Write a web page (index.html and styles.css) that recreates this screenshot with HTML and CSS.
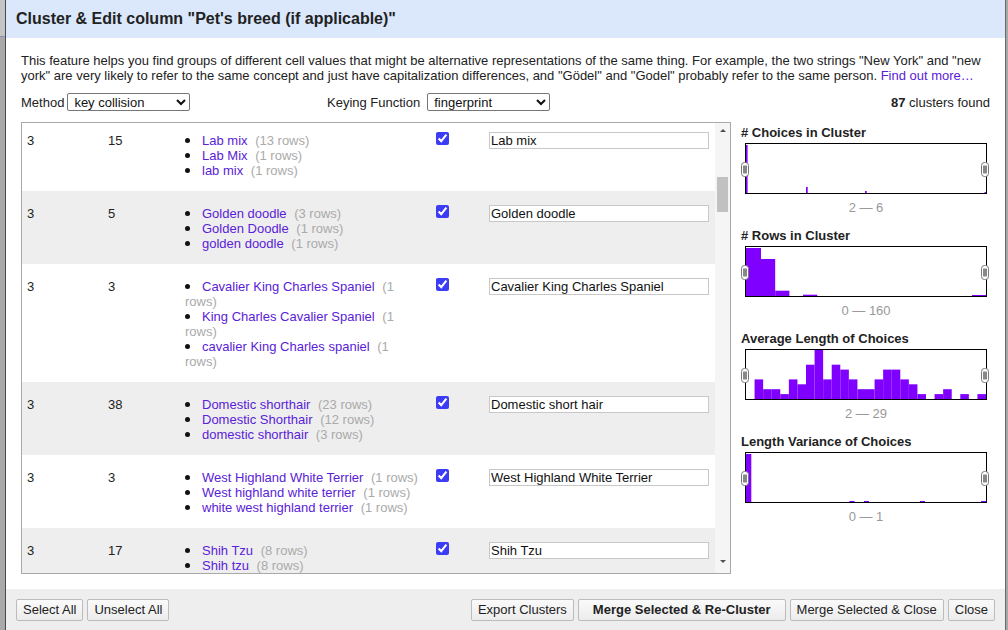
FILE: index.html
```html
<!DOCTYPE html>
<html>
<head>
<meta charset="utf-8">
<link rel="stylesheet" href="styles.css">
</head>
<body>
<div class="strip"></div>
<div class="dialog">
  <div class="dlg-header">Cluster &amp; Edit column "Pet's breed (if applicable)"</div>
  <div class="dlg-body">
    <p class="desc">This feature helps you find groups of different cell values that might be alternative representations of the same thing. For example, the two strings "New York" and "new york" are very likely to refer to the same concept and just have capitalization differences, and "Gödel" and "Godel" probably refer to the same person. <a class="link" href="#">Find out more…</a></p>
    <div class="controls">
      <div class="ctl-method">Method <select class="sel"><option>key collision</option></select></div>
      <div class="ctl-key">Keying Function <select class="sel"><option>fingerprint</option></select></div>
      <div class="found"><b>87</b> clusters found</div>
    </div>
    <div class="main">
      <div class="tablebox">
        <div class="tablewrap">
          <table class="clusters">
            <colgroup><col class="c1"><col class="c2"><col class="c3"><col class="c4"><col class="c5"></colgroup>
            <tr class="odd">
              <td>3</td><td>15</td>
              <td class="names"><ul class="choices">
                <li><a class="link" href="#">Lab mix</a> <span class="cnt">(13 rows)</span></li>
                <li><a class="link" href="#">Lab Mix</a> <span class="cnt">(1 rows)</span></li>
                <li><a class="link" href="#">lab mix</a> <span class="cnt">(1 rows)</span></li>
              </ul></td>
              <td><input class="chk" type="checkbox" checked></td>
              <td><input class="val" type="text" value="Lab mix"></td>
            </tr>
            <tr class="even">
              <td>3</td><td>5</td>
              <td class="names"><ul class="choices">
                <li><a class="link" href="#">Golden doodle</a> <span class="cnt">(3 rows)</span></li>
                <li><a class="link" href="#">Golden Doodle</a> <span class="cnt">(1 rows)</span></li>
                <li><a class="link" href="#">golden doodle</a> <span class="cnt">(1 rows)</span></li>
              </ul></td>
              <td><input class="chk" type="checkbox" checked></td>
              <td><input class="val" type="text" value="Golden doodle"></td>
            </tr>
            <tr class="odd">
              <td>3</td><td>3</td>
              <td class="names"><ul class="choices">
                <li><a class="link" href="#">Cavalier King Charles Spaniel</a> <span class="cnt">(1 rows)</span></li>
                <li><a class="link" href="#">King Charles Cavalier Spaniel</a> <span class="cnt">(1 rows)</span></li>
                <li><a class="link" href="#">cavalier King Charles spaniel</a> <span class="cnt">(1 rows)</span></li>
              </ul></td>
              <td><input class="chk" type="checkbox" checked></td>
              <td><input class="val" type="text" value="Cavalier King Charles Spaniel"></td>
            </tr>
            <tr class="even">
              <td>3</td><td>38</td>
              <td class="names"><ul class="choices">
                <li><a class="link" href="#">Domestic shorthair</a> <span class="cnt">(23 rows)</span></li>
                <li><a class="link" href="#">Domestic Shorthair</a> <span class="cnt">(12 rows)</span></li>
                <li><a class="link" href="#">domestic shorthair</a> <span class="cnt">(3 rows)</span></li>
              </ul></td>
              <td><input class="chk" type="checkbox" checked></td>
              <td><input class="val" type="text" value="Domestic short hair"></td>
            </tr>
            <tr class="odd">
              <td>3</td><td>3</td>
              <td class="names"><ul class="choices">
                <li><a class="link" href="#">West Highland White Terrier</a> <span class="cnt">(1 rows)</span></li>
                <li><a class="link" href="#">West highland white terrier</a> <span class="cnt">(1 rows)</span></li>
                <li><a class="link" href="#">white west highland terrier</a> <span class="cnt">(1 rows)</span></li>
              </ul></td>
              <td><input class="chk" type="checkbox" checked></td>
              <td><input class="val" type="text" value="West Highland White Terrier"></td>
            </tr>
            <tr class="even">
              <td>3</td><td>17</td>
              <td class="names"><ul class="choices">
                <li><a class="link" href="#">Shih Tzu</a> <span class="cnt">(8 rows)</span></li>
                <li><a class="link" href="#">Shih tzu</a> <span class="cnt">(8 rows)</span></li>
                <li><a class="link" href="#">shih tzu</a> <span class="cnt">(1 rows)</span></li>
              </ul></td>
              <td><input class="chk" type="checkbox" checked></td>
              <td><input class="val" type="text" value="Shih Tzu"></td>
            </tr>
          </table>
        </div>
        <div class="scrollbar">
          <div class="sb-btn"><div class="arrow-up"></div></div>
          <div class="sb-track"><div class="sb-thumb"></div></div>
          <div class="sb-btn sb-btn-down"><div class="arrow-down"></div></div>
        </div>
      </div>
      <div class="facets">
        <div class="facet">
          <div class="facet-title"># Choices in Cluster</div>
          <div class="hist">
            <svg class="hist-svg" width="240" height="49" viewBox="0 0 240 49">
              <g fill="#7f00ff">
                <rect x="0" y="1" width="1.6" height="48"/>
                <rect x="60" y="43" width="1.7" height="6"/>
                <rect x="119" y="47" width="1.7" height="2"/>
                <rect x="238.5" y="48" width="1.5" height="1"/>
              </g>
            </svg>
            <svg class="handle handle-l" width="8" height="15" viewBox="0 0 8 15"><rect x="0.5" y="0.5" width="7" height="14" rx="3" fill="#fff" stroke="#777"/><path d="M3 3.5V11.5M5 3.5V11.5" stroke="#111" stroke-width="1"/></svg>
            <svg class="handle handle-r" width="8" height="15" viewBox="0 0 8 15"><rect x="0.5" y="0.5" width="7" height="14" rx="3" fill="#fff" stroke="#777"/><path d="M3 3.5V11.5M5 3.5V11.5" stroke="#111" stroke-width="1"/></svg>
          </div>
          <div class="facet-range">2 — 6</div>
        </div>
        <div class="facet">
          <div class="facet-title"># Rows in Cluster</div>
          <div class="hist">
            <svg class="hist-svg" width="240" height="49" viewBox="0 0 240 49">
              <g fill="#7f00ff">
                <rect x="0" y="1" width="15" height="48"/>
                <rect x="15" y="12" width="14.2" height="37"/>
                <rect x="29.2" y="43.7" width="14.2" height="5.3"/>
                <rect x="57" y="47.7" width="14.3" height="1.3"/>
                <rect x="226" y="48" width="14" height="1"/>
              </g>
            </svg>
            <svg class="handle handle-l" width="8" height="15" viewBox="0 0 8 15"><rect x="0.5" y="0.5" width="7" height="14" rx="3" fill="#fff" stroke="#777"/><path d="M3 3.5V11.5M5 3.5V11.5" stroke="#111" stroke-width="1"/></svg>
            <svg class="handle handle-r" width="8" height="15" viewBox="0 0 8 15"><rect x="0.5" y="0.5" width="7" height="14" rx="3" fill="#fff" stroke="#777"/><path d="M3 3.5V11.5M5 3.5V11.5" stroke="#111" stroke-width="1"/></svg>
          </div>
          <div class="facet-range">0 — 160</div>
        </div>
        <div class="facet">
          <div class="facet-title">Average Length of Choices</div>
          <div class="hist">
            <svg class="hist-svg" width="240" height="49" viewBox="0 0 240 49">
              <g fill="#7f00ff">
                <rect x="8.57" y="29.4" width="8.57" height="19.6"/>
                <rect x="17.14" y="39.2" width="8.57" height="9.8"/>
                <rect x="25.71" y="39.2" width="8.57" height="9.8"/>
                <rect x="34.29" y="44.1" width="8.57" height="4.9"/>
                <rect x="42.86" y="29.4" width="8.57" height="19.6"/>
                <rect x="51.43" y="34.3" width="8.57" height="14.7"/>
                <rect x="60" y="14.7" width="8.57" height="34.3"/>
                <rect x="68.57" y="0" width="8.57" height="49"/>
                <rect x="77.14" y="29.4" width="8.57" height="19.6"/>
                <rect x="85.71" y="14.7" width="8.57" height="34.3"/>
                <rect x="94.29" y="19.6" width="8.57" height="29.4"/>
                <rect x="102.86" y="29.4" width="8.57" height="19.6"/>
                <rect x="111.43" y="39.2" width="8.57" height="9.8"/>
                <rect x="120" y="39.2" width="8.57" height="9.8"/>
                <rect x="128.57" y="29.4" width="8.57" height="19.6"/>
                <rect x="137.14" y="19.6" width="8.57" height="29.4"/>
                <rect x="145.71" y="19.6" width="8.57" height="29.4"/>
                <rect x="154.29" y="29.4" width="8.57" height="19.6"/>
                <rect x="162.86" y="34.3" width="8.57" height="14.7"/>
                <rect x="171.43" y="44.1" width="8.57" height="4.9"/>
                <rect x="188.57" y="44.1" width="8.57" height="4.9"/>
                <rect x="197.14" y="39.2" width="8.57" height="9.8"/>
                <rect x="214.29" y="44.1" width="8.57" height="4.9"/>
                <rect x="231.43" y="44.1" width="8.57" height="4.9"/>
              </g>
            </svg>
            <svg class="handle handle-l" width="8" height="15" viewBox="0 0 8 15"><rect x="0.5" y="0.5" width="7" height="14" rx="3" fill="#fff" stroke="#777"/><path d="M3 3.5V11.5M5 3.5V11.5" stroke="#111" stroke-width="1"/></svg>
            <svg class="handle handle-r" width="8" height="15" viewBox="0 0 8 15"><rect x="0.5" y="0.5" width="7" height="14" rx="3" fill="#fff" stroke="#777"/><path d="M3 3.5V11.5M5 3.5V11.5" stroke="#111" stroke-width="1"/></svg>
          </div>
          <div class="facet-range">2 — 29</div>
        </div>
        <div class="facet">
          <div class="facet-title">Length Variance of Choices</div>
          <div class="hist">
            <svg class="hist-svg" width="240" height="49" viewBox="0 0 240 49">
              <g fill="#7f00ff">
                <rect x="0" y="1" width="5.3" height="48"/>
                <rect x="103.5" y="48" width="5" height="1"/>
                <rect x="118" y="48" width="5" height="1"/>
                <rect x="174" y="48" width="5" height="1"/>
                <rect x="235" y="48" width="5" height="1"/>
              </g>
            </svg>
            <svg class="handle handle-l" width="8" height="15" viewBox="0 0 8 15"><rect x="0.5" y="0.5" width="7" height="14" rx="3" fill="#fff" stroke="#777"/><path d="M3 3.5V11.5M5 3.5V11.5" stroke="#111" stroke-width="1"/></svg>
            <svg class="handle handle-r" width="8" height="15" viewBox="0 0 8 15"><rect x="0.5" y="0.5" width="7" height="14" rx="3" fill="#fff" stroke="#777"/><path d="M3 3.5V11.5M5 3.5V11.5" stroke="#111" stroke-width="1"/></svg>
          </div>
          <div class="facet-range">0 — 1</div>
        </div>
      </div>
    </div>
  </div>
  <div class="dlg-footer">
    <div class="btn-group">
      <button class="btn">Select All</button>
      <button class="btn">Unselect All</button>
    </div>
    <div class="btn-group">
      <button class="btn">Export Clusters</button>
      <button class="btn btn-primary">Merge Selected &amp; Re-Cluster</button>
      <button class="btn">Merge Selected &amp; Close</button>
      <button class="btn">Close</button>
    </div>
  </div>
</div>
</body>
</html>
```

FILE: styles.css
```css
* { box-sizing: border-box; }
html, body { margin: 0; padding: 0; }
body {
  width: 1008px;
  height: 630px;
  overflow: hidden;
  background: #a8a8a8;
  font-family: "Liberation Sans", Arial, sans-serif;
  font-size: 13px;
  color: #222;
  display: flex;
}
.strip {
  width: 5px;
  height: 630px;
  background: linear-gradient(#c4c4c4 0, #c4c4c4 36px, #8d8db8 36px, #8d8db8 37px, #a9a9a9 37px);
}
.dialog {
  width: 1001px;
  height: 630px;
  border-left: 1px solid #4a4a4a;
  border-right: 1px solid #6a6a6a;
  background: #fff;
  display: flex;
  flex-direction: column;
}
.dlg-header {
  height: 38px;
  flex: 0 0 38px;
  background: #dbe8fc;
  padding-left: 10px;
  display: flex;
  align-items: center;
  font-size: 16px;
  font-weight: bold;
  color: #222;
}
.dlg-body {
  padding: 15px;
  height: 551px;
  flex: 0 0 551px;
}
.desc {
  margin: 0;
  line-height: 15px;
}
.link { color: #5a22d8; text-decoration: none; }
.controls {
  margin-top: 10px;
  height: 18px;
  display: flex;
  align-items: center;
}
.ctl-method { width: 306px; display: flex; align-items: center; gap: 3px; }
.ctl-key { display: flex; align-items: center; gap: 7px; }
.found { margin-left: auto; }
.sel {
  width: 123px;
  height: 18px;
  font-family: "Liberation Sans", Arial, sans-serif;
  font-size: 13px;
  color: #111;
  padding: 0 0 0 2px;
  border: 1px solid #767676;
  border-radius: 2px;
  background: #fff;
}
.main {
  margin-top: 11px;
  display: flex;
  gap: 9px;
}
.tablebox {
  width: 710px;
  height: 452px;
  border: 1px solid #a9a9a9;
  display: flex;
}
.tablewrap {
  flex: 1;
  overflow: hidden;
}
.clusters {
  border-collapse: collapse;
  table-layout: fixed;
  width: 693px;
  margin-top: -5px;
}
.c1 { width: 81px; }
.c2 { width: 77px; }
.c3 { width: 251px; }
.c4 { width: 53px; }
.c5 { width: 231px; }
.clusters td {
  vertical-align: top;
  padding: 15px 5px 13px 5px;
  line-height: 15px;
}
.clusters td.names { padding-right: 10px; }
.odd td { background: #fff; }
.even td { background: #eee; }
.choices {
  list-style: none;
  margin: 0;
  padding: 0;
}
.choices li::before {
  content: "";
  display: inline-block;
  width: 5px;
  height: 5px;
  border-radius: 50%;
  background: #111;
  margin: 0 12px 0 0;
  vertical-align: 2px;
}
.cnt { color: #aaa; margin-left: 4px; }
.chk {
  display: block;
  margin: -1px 0 0 0;
  width: 13px;
  height: 13px;
  accent-color: #3c3cf4;
}
.val {
  display: block;
  margin-top: -1px;
  width: 220px;
  height: 17px;
  border: 1px solid #c8c8c8;
  padding: 0 1px;
  font-family: "Liberation Sans", Arial, sans-serif;
  font-size: 13px;
  color: #111;
  background: #fff;
  outline: none;
}
.scrollbar {
  width: 15px;
  background: #f5f5f5;
  display: flex;
  flex-direction: column;
}
.sb-btn {
  height: 14px;
  display: flex;
  justify-content: center;
  padding-top: 6px;
}
.sb-btn-down { padding-top: 0; align-items: flex-start; height: 14px; }
.arrow-up {
  width: 0; height: 0;
  border-left: 3px solid transparent;
  border-right: 3px solid transparent;
  border-bottom: 3.5px solid #505050;
}
.arrow-down {
  width: 0; height: 0;
  margin-top: 1px;
  border-left: 3px solid transparent;
  border-right: 3px solid transparent;
  border-top: 3.5px solid #505050;
}
.sb-track { flex: 1; padding: 0 2px; }
.sb-thumb {
  margin-top: 40px;
  height: 35px;
  background: #c1c1c1;
}
.facets {
  width: 250px;
  padding-top: 2px;
}
.facet { margin-bottom: 12px; }
.facet-title {
  font-weight: bold;
  line-height: 15px;
  padding: 1px 0 0 1px;
}
.hist {
  position: relative;
  margin: 3px 0 0 5px;
  width: 242px;
  height: 51px;
  border: 1px solid #000;
}
.hist-svg { display: block; }
.handle { position: absolute; top: 18px; }
.handle-l { left: -5px; }
.handle-r { left: 235px; }
.facet-range {
  margin: 6px 0 0 5px;
  width: 242px;
  text-align: center;
  color: #999;
  line-height: 15px;
}
.dlg-footer {
  flex: 1;
  background: #eee;
  padding: 10px 10px 0 10px;
  display: flex;
  justify-content: space-between;
  align-items: flex-start;
}
.btn-group { display: flex; gap: 4px; }
.btn {
  height: 22px;
  line-height: 20px;
  padding: 0 6px;
  font-family: "Liberation Sans", Arial, sans-serif;
  font-size: 13px;
  color: #222;
  background: linear-gradient(#fafafa, #ececec);
  border: 1px solid #bcbcbc;
  border-radius: 2px;
}
.btn-primary { font-weight: bold; padding: 0 14px; }
```
